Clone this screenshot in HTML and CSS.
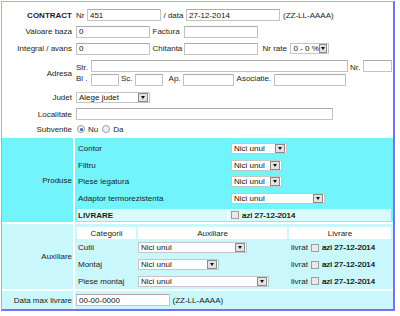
FILE: index.html
```html
<!DOCTYPE html>
<html lang="ro">

<head>
    <meta charset="UTF-8">
    <meta name="viewport" content="width=device-width, initial-scale=1.0">
    <title>Contract</title>
    <link rel="stylesheet" href="styles.css">
</head>

<body>
    <div class="form">
        <!-- Date contract -->
        <div class="top">
            <div class="lbl"><b>CONTRACT</b></div>
            <div class="val">
                <span>Nr</span><input class="w74" value="451">
                <span>/ data</span><input class="w94" value="27-12-2014">
                <span class="note">(ZZ-LL-AAAA)</span>
            </div>

            <div class="lbl">Valoare baza</div>
            <div class="val">
                <input class="w74" value="0">
                <span class="mid">Factura</span><input class="w74">
            </div>

            <div class="lbl">Integral / avans</div>
            <div class="val">
                <input class="w74" value="0">
                <span class="mid">Chitanta</span><input class="w74">
                <span class="rate">Nr rate</span>
                <span class="select w39"><span class="opt">0 - 0 %</span><span class="arrow"></span></span>
            </div>

            <div class="lbl adresa">Adresa</div>
            <div class="val addr1">
                <span class="short">Str.</span><input class="w257">
                <span>Nr.</span><input class="w29">
            </div>
            <div class="val addr2">
                <span class="short">Bl .</span><input class="w28">
                <span>Sc.</span><input class="w28">
                <span class="ap">Ap.</span><input class="w51">
                <span>Asociatie.</span><input class="w72">
            </div>

            <div class="lbl">Judet</div>
            <div class="val">
                <span class="select w74"><span class="opt">Alege judet</span><span class="arrow"></span></span>
            </div>

            <div class="lbl">Localitate</div>
            <div class="val">
                <input class="w257">
            </div>

            <div class="lbl">Subventie</div>
            <div class="val radios">
                <input type="radio" name="subventie" checked><span class="rtext">Nu</span>
                <input type="radio" name="subventie"><span>Da</span>
            </div>
        </div>

        <!-- Produse -->
        <div class="section produse">
            <div class="lbl">Produse</div>
            <div class="box">
                <div class="items">
                    <div class="name">Contor</div>
                    <div class="pick"><span class="select w56"><span class="opt">Nici unul</span><span class="arrow"></span></span></div>
                    <div class="name">Filtru</div>
                    <div class="pick"><span class="select w51"><span class="opt">Nici unul</span><span class="arrow"></span></span></div>
                    <div class="name">Piese legatura</div>
                    <div class="pick"><span class="select w51"><span class="opt">Nici unul</span><span class="arrow"></span></span></div>
                    <div class="name">Adaptor termorezistenta</div>
                    <div class="pick"><span class="select w94"><span class="opt">Nici unul</span><span class="arrow"></span></span></div>
                    <div class="name livrare"><b>LIVRARE</b></div>
                    <div class="pick livrare"><input type="checkbox"><span class="azi">azi 27-12-2014</span></div>
                </div>
            </div>
        </div>

        <!-- Auxiliare -->
        <div class="section auxiliare">
            <div class="lbl">Auxiliare</div>
            <div class="box">
                <div class="aux">
                    <div class="head">Categorii</div>
                    <div class="head">Auxiliare</div>
                    <div class="head">Livrare</div>

                    <div class="name">Cutii</div>
                    <div class="pick"><span class="select w109"><span class="opt">Nici unul</span><span class="arrow"></span></span></div>
                    <div class="done">livrat<input type="checkbox"><span class="azi">azi 27-12-2014</span></div>

                    <div class="name">Montaj</div>
                    <div class="pick"><span class="select w81"><span class="opt">Nici unul</span><span class="arrow"></span></span></div>
                    <div class="done">livrat<input type="checkbox"><span class="azi">azi 27-12-2014</span></div>

                    <div class="name">Piese montaj</div>
                    <div class="pick"><span class="select w131"><span class="opt">Nici unul</span><span class="arrow"></span></span></div>
                    <div class="done">livrat<input type="checkbox"><span class="azi">azi 27-12-2014</span></div>
                </div>
            </div>
        </div>

        <!-- Data livrare -->
        <div class="section datarow">
            <div class="lbl">Data max livrare</div>
            <div class="val">
                <input class="w94" value="00-00-0000">
                <span>(ZZ-LL-AAAA)</span>
            </div>
        </div>
    </div>
</body>

</html>
```

FILE: styles.css
```css
body {
    margin: 0;
    font-family: "Liberation Sans", Arial, sans-serif;
    font-size: 8px;
    color: #1c1c1c;
    background: #fff;
}

.form {
    width: 391px;
    margin: 1px 0 0 1px;
    border-left: 1px solid #a8a8fa;
    border-top: 1px solid #a8a8fa;
    border-right: 2px solid #7272f2;
    border-bottom: 2px solid #7272f2;
}

.top {
    display: grid;
    grid-template-columns: 71px 318px;
    grid-template-rows: 16px 17px 17px 16px 16px 17px 16px 14px;
    column-gap: 2px;
    padding-top: 5px;
}

.lbl {
    display: flex;
    align-items: center;
    justify-content: flex-end;
    padding-right: 1px;
    white-space: nowrap;
}

.adresa {
    grid-row: span 2;
}

.val {
    display: flex;
    align-items: center;
    gap: 2.5px;
    padding-left: 1px;
    white-space: nowrap;
}

.addr1 {
    align-items: flex-end;
    padding-bottom: 1px;
}

.addr2 {
    align-items: flex-start;
    padding-top: 1px;
}

.short {
    width: 12px;
}

.mid {
    width: 29px;
}

.rate {
    margin-left: 2px;
    margin-right: 1px;
}

.ap {
    margin-left: 3px;
}

.note {
    margin-left: 0.5px;
}

input {
    box-sizing: border-box;
    height: 12px;
    margin: 0;
    padding: 0 2px;
    border: 1px solid #c3c3c3;
    border-top-color: #ababab;
    font: inherit;
    color: #111;
    background: #fff;
}

input[type="radio"],
input[type="checkbox"] {
    appearance: none;
    width: 8px;
    height: 8px;
    padding: 0;
    border: 1px solid #9c9c9c;
    background: #e9e9e9;
}

input[type="radio"] {
    border-radius: 50%;
    position: relative;
    background: #f2f2f2;
}

input[type="radio"]:checked::after {
    content: "";
    position: absolute;
    left: 1.5px;
    top: 1.5px;
    width: 3px;
    height: 3px;
    border-radius: 50%;
    background: #2a5fc8;
}

.radios {
    gap: 3px;
    padding-left: 2px;
}

.rtext {
    margin-right: 1px;
}

.azi {
    color: #000;
    -webkit-text-stroke: 0.2px #000;
}

.w28 { width: 28px; }
.w29 { width: 29px; }
.w39 { width: 39px; }
.w51 { width: 51px; }
.w56 { width: 56px; }
.w72 { width: 72px; }
.w74 { width: 74px; }
.w81 { width: 81px; }
.w94 { width: 94px; }
.w109 { width: 109px; }
.w131 { width: 131px; }
.w257 { width: 257px; }

.select {
    box-sizing: border-box;
    display: inline-flex;
    align-items: center;
    justify-content: space-between;
    height: 11px;
    padding: 0 1px 0 2px;
    border: 1px solid #c6c6c6;
    background: #fff;
    color: #111;
}

.arrow {
    box-sizing: border-box;
    display: flex;
    align-items: center;
    justify-content: center;
    width: 10px;
    height: 9px;
    border: 1px solid #8a8a8a;
    background: #e2e2e2;
}

.arrow::before {
    content: "";
    border-left: 2.5px solid transparent;
    border-right: 2.5px solid transparent;
    border-top: 3px solid #111;
}

/* Sectiuni colorate */
.section {
    display: grid;
    grid-template-columns: 71px 318px;
    column-gap: 2px;
    margin-top: 2px;
}

.produse > .lbl,
.produse > .box {
    background: #72f4fc;
}

.auxiliare > .lbl,
.auxiliare > .box,
.datarow > .lbl,
.datarow > .val {
    background: #caf7fb;
}

.produse .box {
    padding: 2px 2px 1px;
}

.items {
    display: grid;
    grid-template-columns: 150px 162px;
    grid-template-rows: 17px 16px 17px 17px 14px;
    column-gap: 2px;
}

.name {
    display: flex;
    align-items: center;
    padding-left: 1px;
    white-space: nowrap;
}

.pick {
    display: flex;
    align-items: center;
    gap: 3px;
    padding-left: 2px;
    white-space: nowrap;
}

.livrare {
    margin-top: 2px;
    background: #d8fafd;
}

.name.livrare {
    border-right: 2px solid #f4feff;
    margin-right: -2px;
}

.auxiliare .box {
    padding: 3px 2px 0;
}

.aux {
    display: grid;
    grid-template-columns: 59px 149px 102px;
    grid-template-rows: 12px 17px 17px 16px;
    column-gap: 2px;
}

.head {
    display: flex;
    align-items: center;
    justify-content: center;
    background: #fff;
}

.aux .pick {
    padding-left: 0;
}

.done {
    display: flex;
    align-items: center;
    gap: 3px;
    padding-left: 2px;
    white-space: nowrap;
}

.datarow {
    height: 18px;
}
```
